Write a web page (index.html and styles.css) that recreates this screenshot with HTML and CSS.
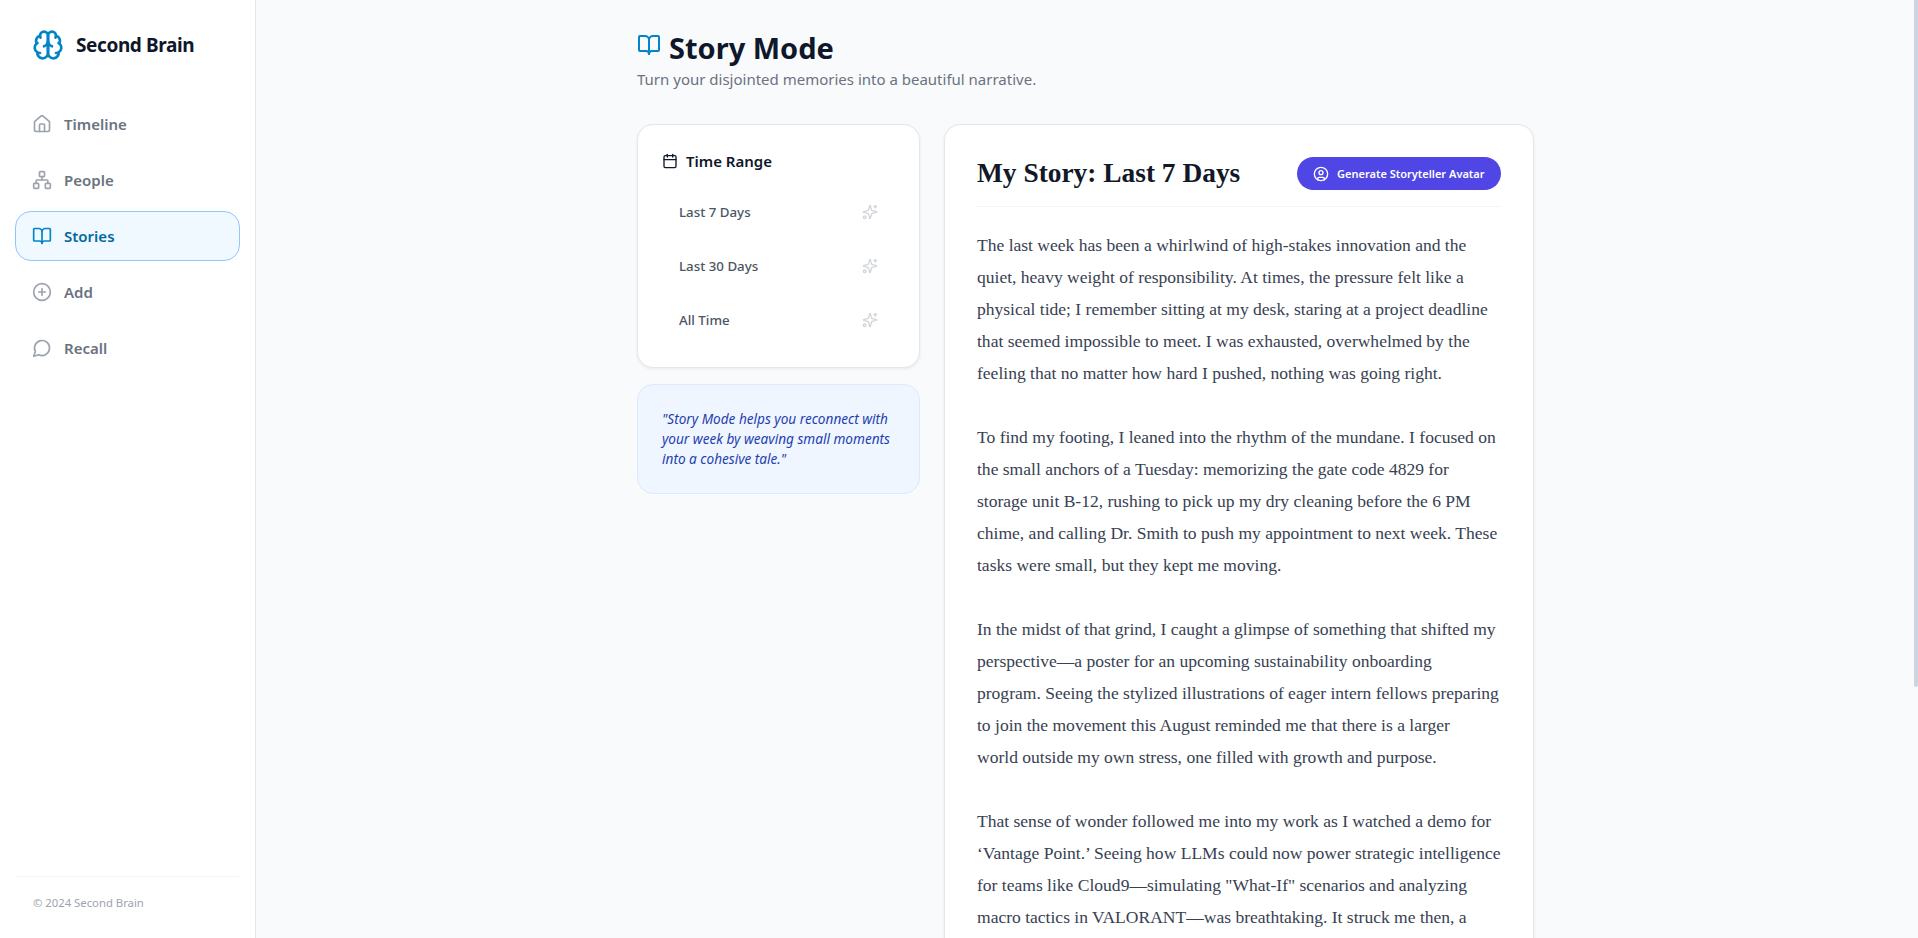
FILE: index.html
```html
<!DOCTYPE html>
<html lang="en">
<head>
  <meta charset="UTF-8" />
  <meta name="viewport" content="width=device-width, initial-scale=1.0" />
  <title>Second Brain - Story Mode</title>
  <link rel="stylesheet" href="styles.css">
</head>
<body>
  <aside class="sidebar">
    <div class="brand">
      <svg class="brand-icon" viewBox="0 0 24 24"><path d="M12 5a3 3 0 1 0-5.997.125 4 4 0 0 0-2.526 5.77 4 4 0 0 0 .556 6.588A4 4 0 1 0 12 18Z"/><path d="M12 5a3 3 0 1 1 5.997.125 4 4 0 0 1 2.526 5.77 4 4 0 0 1-.556 6.588A4 4 0 1 1 12 18Z"/><path d="M15 13a4.5 4.5 0 0 1-3-4 4.5 4.5 0 0 1-3 4"/><path d="M17.599 6.5a3 3 0 0 0 .399-1.375"/><path d="M6.003 5.125A3 3 0 0 0 6.401 6.5"/><path d="M3.477 10.896a4 4 0 0 1 .585-.396"/><path d="M19.938 10.5a4 4 0 0 1 .585.396"/><path d="M6 18a4 4 0 0 1-1.967-.516"/><path d="M19.967 17.484A4 4 0 0 1 18 18"/></svg>
      <span class="brand-name">Second Brain</span>
    </div>

    <nav class="nav">
      <a class="nav-item" href="#timeline">
        <svg class="nav-icon" viewBox="0 0 24 24"><path d="M15 21v-8a1 1 0 0 0-1-1h-4a1 1 0 0 0-1 1v8"/><path d="M3 10a2 2 0 0 1 .709-1.528l7-5.999a2 2 0 0 1 2.582 0l7 5.999A2 2 0 0 1 21 10v9a2 2 0 0 1-2 2H5a2 2 0 0 1-2-2z"/></svg>
        Timeline
      </a>
      <a class="nav-item" href="#people">
        <svg class="nav-icon" viewBox="0 0 24 24"><rect x="16" y="16" width="6" height="6" rx="1"/><rect x="2" y="16" width="6" height="6" rx="1"/><rect x="9" y="2" width="6" height="6" rx="1"/><path d="M5 16v-3a1 1 0 0 1 1-1h12a1 1 0 0 1 1 1v3"/><path d="M12 12V8"/></svg>
        People
      </a>
      <a class="nav-item active" href="#stories">
        <svg class="nav-icon" viewBox="0 0 24 24"><path d="M12 7v14"/><path d="M3 18a1 1 0 0 1-1-1V4a1 1 0 0 1 1-1h5a4 4 0 0 1 4 4 4 4 0 0 1 4-4h5a1 1 0 0 1 1 1v13a1 1 0 0 1-1 1h-6a3 3 0 0 0-3 3 3 3 0 0 0-3-3z"/></svg>
        Stories
      </a>
      <a class="nav-item" href="#add">
        <svg class="nav-icon" viewBox="0 0 24 24"><circle cx="12" cy="12" r="10"/><path d="M8 12h8"/><path d="M12 8v8"/></svg>
        Add
      </a>
      <a class="nav-item" href="#recall">
        <svg class="nav-icon" viewBox="0 0 24 24"><path d="M7.9 20A9 9 0 1 0 4 16.1L2 22Z"/></svg>
        Recall
      </a>
    </nav>

    <footer class="sidebar-footer">© 2024 Second Brain</footer>
  </aside>

  <main class="main">
    <div class="container">
      <header class="page-header">
        <h1 class="page-title">
          <svg class="title-icon" viewBox="0 0 24 24"><path d="M12 7v14"/><path d="M3 18a1 1 0 0 1-1-1V4a1 1 0 0 1 1-1h5a4 4 0 0 1 4 4 4 4 0 0 1 4-4h5a1 1 0 0 1 1 1v13a1 1 0 0 1-1 1h-6a3 3 0 0 0-3 3 3 3 0 0 0-3-3z"/></svg>
          Story Mode
        </h1>
        <p class="page-subtitle">Turn your disjointed memories into a beautiful narrative.</p>
      </header>

      <div class="columns">
        <div class="side-col">
          <section class="card range-card">
            <h3 class="range-title">
              <svg class="range-icon" viewBox="0 0 24 24"><path d="M8 2v4"/><path d="M16 2v4"/><rect x="3" y="4" width="18" height="18" rx="2"/><path d="M3 10h18"/></svg>
              Time Range
            </h3>
            <button class="range-option">Last 7 Days
              <svg class="sparkle" viewBox="0 0 24 24"><path d="M9.937 15.5A2 2 0 0 0 8.5 14.063l-6.135-1.582a.5.5 0 0 1 0-.962L8.5 9.936A2 2 0 0 0 9.937 8.5l1.582-6.135a.5.5 0 0 1 .963 0L14.063 8.5A2 2 0 0 0 15.5 9.937l6.135 1.581a.5.5 0 0 1 0 .964L15.5 14.063a2 2 0 0 0-1.437 1.437l-1.582 6.135a.5.5 0 0 1-.963 0z"/><path d="M20 2v4"/><path d="M22 4h-4"/><circle cx="4" cy="20" r="2"/></svg>
            </button>
            <button class="range-option">Last 30 Days
              <svg class="sparkle" viewBox="0 0 24 24"><path d="M9.937 15.5A2 2 0 0 0 8.5 14.063l-6.135-1.582a.5.5 0 0 1 0-.962L8.5 9.936A2 2 0 0 0 9.937 8.5l1.582-6.135a.5.5 0 0 1 .963 0L14.063 8.5A2 2 0 0 0 15.5 9.937l6.135 1.581a.5.5 0 0 1 0 .964L15.5 14.063a2 2 0 0 0-1.437 1.437l-1.582 6.135a.5.5 0 0 1-.963 0z"/><path d="M20 2v4"/><path d="M22 4h-4"/><circle cx="4" cy="20" r="2"/></svg>
            </button>
            <button class="range-option">All Time
              <svg class="sparkle" viewBox="0 0 24 24"><path d="M9.937 15.5A2 2 0 0 0 8.5 14.063l-6.135-1.582a.5.5 0 0 1 0-.962L8.5 9.936A2 2 0 0 0 9.937 8.5l1.582-6.135a.5.5 0 0 1 .963 0L14.063 8.5A2 2 0 0 0 15.5 9.937l6.135 1.581a.5.5 0 0 1 0 .964L15.5 14.063a2 2 0 0 0-1.437 1.437l-1.582 6.135a.5.5 0 0 1-.963 0z"/><path d="M20 2v4"/><path d="M22 4h-4"/><circle cx="4" cy="20" r="2"/></svg>
            </button>
          </section>

          <aside class="tip">"Story Mode helps you reconnect with your week by weaving small moments into a cohesive tale."</aside>
        </div>

        <article class="card story-card">
          <div class="story-head">
            <h2 class="story-title">My Story: Last 7 Days</h2>
            <button class="avatar-btn">
              <svg class="avatar-icon" viewBox="0 0 24 24"><circle cx="12" cy="12" r="10"/><circle cx="12" cy="10" r="3"/><path d="M7 20.662V19a2 2 0 0 1 2-2h6a2 2 0 0 1 2 2v1.662"/></svg>
              Generate Storyteller Avatar
            </button>
          </div>
          <div class="story-body">
            <p>The last week has been a whirlwind of high-stakes innovation and the<br>quiet, heavy weight of responsibility. At times, the pressure felt like a<br>physical tide; I remember sitting at my desk, staring at a project deadline<br>that seemed impossible to meet. I was exhausted, overwhelmed by the<br>feeling that no matter how hard I pushed, nothing was going right.</p>
            <p>To find my footing, I leaned into the rhythm of the mundane. I focused on<br>the small anchors of a Tuesday: memorizing the gate code 4829 for<br>storage unit B-12, rushing to pick up my dry cleaning before the 6 PM<br>chime, and calling Dr. Smith to push my appointment to next week. These<br>tasks were small, but they kept me moving.</p>
            <p>In the midst of that grind, I caught a glimpse of something that shifted my<br>perspective—a poster for an upcoming sustainability onboarding<br>program. Seeing the stylized illustrations of eager intern fellows preparing<br>to join the movement this August reminded me that there is a larger<br>world outside my own stress, one filled with growth and purpose.</p>
            <p>That sense of wonder followed me into my work as I watched a demo for<br>‘Vantage Point.’ Seeing how LLMs could now power strategic intelligence<br>for teams like Cloud9—simulating "What-If" scenarios and analyzing<br>macro tactics in VALORANT—was breathtaking. It struck me then, a</p>
          </div>
        </article>
      </div>
    </div>
    <div class="scroll-thumb"></div>
  </main>
</body>
</html>
```

FILE: styles.css
```css
* {
  margin: 0;
  padding: 0;
  box-sizing: border-box;
}

body {
  display: flex;
  height: 100vh;
  overflow: hidden;
  background: #f9fafc;
  color: #0f172a;
  font-family: 'Noto Sans', sans-serif;
}

svg {
  fill: none;
  stroke: currentColor;
  stroke-width: 2;
  stroke-linecap: round;
  stroke-linejoin: round;
  flex-shrink: 0;
}

/* sidebar */
.sidebar {
  display: flex;
  flex-direction: column;
  width: 256px;
  flex-shrink: 0;
  background: #fff;
  border-right: 1px solid #e5e7eb;
}

.brand {
  display: flex;
  align-items: flex-start;
  gap: 12px;
  padding: 29px 16px 0 32px;
  height: 99px;
}

.brand-icon {
  width: 32px;
  height: 32px;
  color: #0284c7;
}

.brand-name {
  font-size: 19px;
  font-weight: 700;
  line-height: 32px;
  letter-spacing: -0.4px;
}

.nav {
  display: flex;
  flex-direction: column;
  gap: 6px;
  padding: 0 15px;
  flex: 1;
}

.nav-item {
  display: flex;
  align-items: center;
  gap: 12px;
  height: 50px;
  padding: 0 16px 1px;
  border: 1px solid transparent;
  border-radius: 16px;
  color: #6b7280;
  font-size: 15px;
  font-weight: 600;
  text-decoration: none;
}

.nav-item.active {
  background: #f0f9ff;
  border-color: #93c5fd;
  color: #0369a1;
}

.nav-icon {
  width: 20px;
  height: 20px;
  color: #9ca3af;
}

.active .nav-icon {
  color: #0284c7;
}

.sidebar-footer {
  margin: 0 16px;
  height: 62px;
  padding: 18px 17px 0;
  border-top: 1px solid #f3f4f6;
  color: #9ca3af;
  font-size: 11.3px;
}

/* main */
.main {
  position: relative;
  flex: 1;
  padding-right: 5px;
  overflow: hidden;
}

/* the page's thin scrollbar, scrolled to the top */
.scroll-thumb {
  position: absolute;
  top: 0;
  right: 0;
  width: 4px;
  height: 687px;
  background: #cbd5e1;
  border-radius: 0 0 2px 2px;
}

.container {
  width: 895px;
  margin: 0 auto;
  padding: 28px 0 32px;
}

.page-header {
  margin-bottom: 33px;
}

.page-title {
  display: flex;
  align-items: center;
  gap: 8px;
  font-size: 29px;
  font-weight: 700;
  line-height: 40px;
}

.title-icon {
  width: 24px;
  height: 24px;
  color: #0284c7;
  margin-top: -6px;
}

.page-subtitle {
  color: #6b7280;
  font-size: 15px;
  line-height: 23px;
}

.columns {
  display: flex;
  gap: 24px;
  align-items: flex-start;
}

.side-col {
  display: flex;
  flex-direction: column;
  gap: 16px;
  width: 283px;
  flex-shrink: 0;
}

.card {
  background: #fff;
  border: 1px solid #e5e7eb;
  border-radius: 16px;
  box-shadow: 0 1px 3px rgba(15, 23, 42, 0.08);
}

.range-card {
  padding: 24px 24px 20px;
}

.range-title {
  display: flex;
  align-items: center;
  gap: 8px;
  height: 24px;
  margin-bottom: 12px;
  font-size: 15px;
  font-weight: 600;
}

.range-icon {
  width: 16px;
  height: 16px;
}

.range-option {
  display: flex;
  align-items: center;
  justify-content: space-between;
  width: 100%;
  height: 54px;
  padding: 0 17px;
  background: none;
  border: none;
  color: #4b5563;
  font-family: inherit;
  font-size: 13.3px;
  font-weight: 500;
}

.sparkle {
  width: 16px;
  height: 16px;
  color: #d1d5db;
}

.tip {
  padding: 24px;
  background: #eff6ff;
  border: 1px solid #dbeafe;
  border-radius: 16px;
  color: #1e40af;
  font-size: 13.6px;
  font-style: italic;
  line-height: 20px;
}

.story-card {
  flex: 1;
  min-height: 1124px;
  padding: 32px;
}

.story-head {
  display: flex;
  align-items: center;
  justify-content: space-between;
  padding-bottom: 16px;
  margin-bottom: 22px;
  border-bottom: 1px solid #f3f4f6;
}

.story-title {
  font-family: 'Liberation Serif', serif;
  font-size: 27.4px;
  font-weight: 700;
  color: #111827;
}

.avatar-btn {
  display: flex;
  align-items: center;
  gap: 8px;
  height: 33px;
  padding: 0 16px;
  background: #4f46e5;
  border: none;
  border-radius: 999px;
  color: #fff;
  font-family: inherit;
  font-size: 11px;
  font-weight: 600;
}

.avatar-icon {
  width: 16px;
  height: 16px;
}

.story-body {
  color: #374151;
  font-family: 'Liberation Serif', serif;
  font-size: 17.55px;
  line-height: 32px;
}

.story-body p {
  margin-bottom: 32px;
  white-space: nowrap;
}
```
